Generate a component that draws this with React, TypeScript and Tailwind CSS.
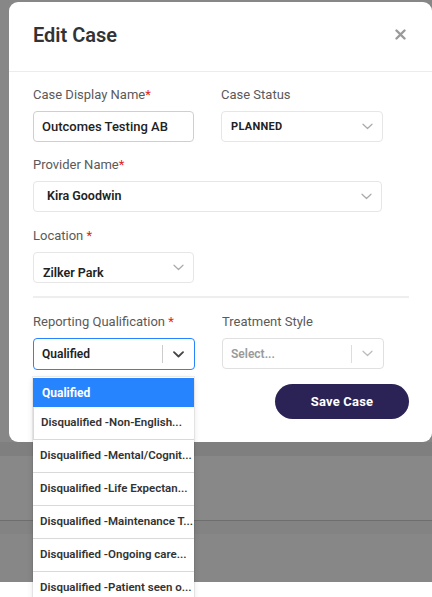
import React from "react";

const Chevron = ({ color = "#aaa", w = 1.5 }: { color?: string; w?: number }) => (
  <svg width="11" height="7" viewBox="0 0 11 7" fill="none">
    <path d="M1 1.2 L5.5 5.5 L10 1.2" stroke={color} strokeWidth={w} strokeLinecap="round" strokeLinejoin="round" />
  </svg>
);

const Label = ({ text, req, space }: { text: string; req?: boolean; space?: boolean }) => (
  <div className="h-[16px] text-[13px] leading-[16px] text-[#5a5a5a] mb-[8px]">
    {text}
    {req && <span className={`text-[#e02424] ${space ? "ml-[4px]" : ""}`}>*</span>}
  </div>
);

const options = [
  "Disqualified -Non-English...",
  "Disqualified -Mental/Cognit...",
  "Disqualified -Life Expectan...",
  "Disqualified -Maintenance T...",
  "Disqualified -Ongoing care...",
  "Disqualified -Patient seen o...",
];

export default function App() {
  return (
    <div className="relative w-[432px] h-[597px] overflow-hidden bg-white" style={{ fontFamily: "Roboto, 'Liberation Sans', sans-serif" }}>
      <div className="h-[582px] bg-[#878787] flex flex-col">
        <div className="pt-[2px] pl-[9px]">
          <div className="w-[423px] h-[440px] bg-white rounded-[9px] flex flex-col">
            <div className="h-[70px] border-b border-[#ececec] flex items-center justify-between pl-[24px] pr-[26px] pb-[4px]">
              <div className="text-[20px] font-semibold text-[#333]">Edit Case</div>
              <svg width="11" height="11" viewBox="0 0 11 11">
                <path d="M1.5 1.5 L9.5 9.5 M9.5 1.5 L1.5 9.5" stroke="#9a9a9a" strokeWidth="2.4" strokeLinecap="round" />
              </svg>
            </div>
            <div className="pl-[24px] pr-[23px] pt-[15px] flex flex-col">
              <div className="flex gap-[27px]">
                <div className="w-[161px]">
                  <Label text="Case Display Name" req />
                  <div className="h-[31px] border border-[#cfcfcf] rounded-[4px] flex items-center pl-[8px] text-[13px] font-medium text-[#222]">
                    Outcomes Testing AB
                  </div>
                </div>
                <div className="w-[162px]">
                  <Label text="Case Status" />
                  <div className="h-[31px] border border-[#e6e6e6] rounded-[4px] flex items-center justify-between pl-[9px] pr-[9px] text-[11px] font-bold text-[#222] tracking-[0.3px]">
                    <span className="pt-[2px]">PLANNED</span>
                    <Chevron w={1.2} />
                  </div>
                </div>
              </div>
              <div className="mt-[15px] w-[349px]">
                <Label text="Provider Name" req />
                <div className="h-[31px] border border-[#e6e6e6] rounded-[4px] flex items-center justify-between pl-[13px] pr-[9px] text-[12.5px] font-semibold text-[#222]">
                  <span>Kira Goodwin</span>
                  <Chevron w={1.2} />
                </div>
              </div>
              <div className="mt-[16px] w-[161px]">
                <Label text="Location " req />
                <div className="h-[31px] border border-[#e6e6e6] rounded-[4px] flex justify-between pl-[9px] pr-[9px] text-[12.5px] font-semibold text-[#222]">
                  <span className="mt-[11px]">Zilker Park</span>
                  <span className="mt-[11px]"><Chevron w={1.2} /></span>
                </div>
              </div>
              <div className="mt-[13px] h-[2px] bg-[#eeeeee]" />
              <div className="mt-[16px] flex gap-[27px]">
                <div className="w-[162px] relative">
                  <Label text="Reporting Qualification " req />
                  <div className="h-[32px] border border-[#2684ff] rounded-[4px] flex items-center pl-[8px] text-[12px] font-semibold text-[#222]">
                    <span className="flex-1">Qualified</span>
                    <span className="w-px h-[18px] bg-[#cccccc]" />
                    <span className="w-[31px] flex justify-center"><Chevron color="#444" w={1.8} /></span>
                  </div>
                  <div className="absolute left-0 top-[63px] w-[161px] bg-white shadow-[0_0_0_1px_rgba(0,0,0,0.06),0_2px_6px_rgba(0,0,0,0.12)] z-10">
                    <div className="h-[29px] mt-[1px] bg-[#2684ff] flex items-center pl-[9px] text-[12px] font-bold text-white">Qualified</div>
                    {options.map((o, i) => (
                      <div
                        key={o}
                        className={`h-[33px] flex items-center pl-[7px] text-[11.5px] font-semibold text-[#333] whitespace-nowrap overflow-hidden border-b ${
                          i === 0 ? "border-[#c7dcf7] border-l border-l-[#c7dcf7] pl-[6px]" : "border-[#d9d9d9]"
                        }`}
                      >
                        {o}
                      </div>
                    ))}
                  </div>
                </div>
                <div className="w-[162px]">
                  <Label text="Treatment Style" />
                  <div className="h-[31px] border border-[#e0e0e0] rounded-[4px] flex items-center pl-[8px] text-[12px] font-semibold text-[#9a9a9a]">
                    <span className="flex-1">Select...</span>
                    <span className="w-px h-[18px] bg-[#dddddd]" />
                    <span className="w-[31px] flex justify-center"><Chevron color="#bbb" w={1.2} /></span>
                  </div>
                </div>
              </div>
              <div className="mt-[14px] flex justify-end">
                <button className="w-[134px] h-[35px] rounded-full bg-[#2b2255] text-white text-[13px] font-bold tracking-[0.2px]">
                  Save Case
                </button>
              </div>
            </div>
          </div>
        </div>
        <div className="h-[14px] bg-[#7f7f7f]" />
        <div className="h-[64px] bg-[#888888]" />
        <div className="h-px bg-[#6e6e6e]" />
        <div className="h-[13px] bg-[#838383]" />
        <div className="flex-1 bg-[#878787]" />
      </div>
    </div>
  );
}
